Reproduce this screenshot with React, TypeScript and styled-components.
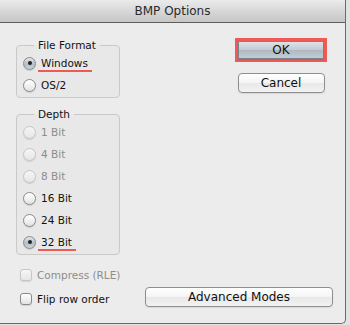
import React from 'react';
import styled, { createGlobalStyle } from 'styled-components';

const GlobalStyle = createGlobalStyle`
  html, body {
    margin: 0;
    padding: 0;
    background: #e2e2e2;
  }
  body {
    font-family: "DejaVu Sans", "Liberation Sans", sans-serif;
    color: #111;
  }
`;

const Window = styled.div`
  background: #ececec;
  border-bottom: 1px solid #6a6a6a;
  border-bottom-right-radius: 5px;
  border-right: 1px solid #6a6a6a;
  box-sizing: border-box;
  height: 324px;
  overflow: hidden;
  width: 346px;
`;

const TitleBar = styled.div`
  align-items: center;
  background: linear-gradient(#ebebeb, #d4d4d4 60%, #c6c6c6);
  border-bottom: 1px solid #5e5e5e;
  border-top-right-radius: 5px;
  display: flex;
  font-size: 12px;
  height: 22px;
  justify-content: center;
  color: #2a2a2a;
`;

const Body = styled.div`
  display: flex;
  flex-direction: column;
  padding: 16px 12px 0 16px;
`;

const TopSection = styled.div`
  display: flex;
  justify-content: space-between;
`;

const LeftColumn = styled.div`
  display: flex;
  flex-direction: column;
  gap: 10px;
  width: 104px;
`;

const GroupBox = styled.fieldset`
  background: rgba(0, 0, 0, 0.015);
  border: 1px solid #c9c9c9;
  border-radius: 4px;
  margin: 0;
  min-width: 0;
  padding: 0 0 1px 6px;
`;

const Legend = styled.legend`
  font-size: 10.5px;
  line-height: 13px;
  margin-left: 11px;
  padding: 0 4px;
`;

const OptionRow = styled.label<{ $disabled?: boolean }>`
  align-items: center;
  color: ${({ $disabled }) => ($disabled ? '#8c8c8c' : '#111')};
  display: flex;
  font-size: 10.5px;
  gap: 5px;
  height: 22px;
`;

const Radio = styled.span<{ $checked?: boolean; $disabled?: boolean }>`
  align-items: center;
  background: ${({ $checked, $disabled }) =>
    $disabled
      ? 'linear-gradient(#f6f6f6, #e6e6e6)'
      : $checked
      ? 'linear-gradient(#e4e8ec, #b4bdc6 55%, #cdd3d9)'
      : 'linear-gradient(#ffffff, #f2f2f2 50%, #e2e2e2)'};
  border: 1px solid ${({ $disabled }) => ($disabled ? '#c6c6c6' : '#8a8a8a')};
  border-radius: 50%;
  box-shadow: 0 1px 1px rgba(0, 0, 0, 0.12);
  box-sizing: border-box;
  display: flex;
  flex: none;
  height: 13px;
  justify-content: center;
  width: 13px;
  &::after {
    background: #222;
    border-radius: 50%;
    content: '';
    display: ${({ $checked }) => ($checked ? 'block' : 'none')};
    height: 4px;
    width: 4px;
  }
`;

const Checkbox = styled.span<{ $disabled?: boolean }>`
  background: ${({ $disabled }) =>
    $disabled ? 'linear-gradient(#f6f6f6, #e6e6e6)' : 'linear-gradient(#ffffff, #f1f1f1 50%, #e2e2e2)'};
  border: 1px solid ${({ $disabled }) => ($disabled ? '#c6c6c6' : '#8a8a8a')};
  border-radius: 3px;
  box-shadow: 0 1px 1px rgba(0, 0, 0, 0.1);
  box-sizing: border-box;
  flex: none;
  height: 12px;
  width: 12px;
`;

const Caption = styled.span<{ $marked?: boolean }>`
  border-bottom: 2px solid ${({ $marked }) => ($marked ? '#ef5b54' : 'transparent')};
  line-height: 13px;
  margin-left: -3px;
  margin-top: 3px;
  padding: 0 4px 0 3px;
`;

const RightColumn = styled.div`
  align-items: center;
  display: flex;
  flex-direction: column;
  gap: 11px;
  margin-right: 6px;
  margin-top: -1px;
  width: 92px;
`;

const Highlight = styled.div`
  border: 3px solid #ef5b54;
  box-sizing: border-box;
  width: 92px;
`;

const Button = styled.button<{ $default?: boolean }>`
  background: ${({ $default }) =>
    $default
      ? 'linear-gradient(#dde2e7, #c3cad2 50%, #aeb8c2 51%, #c4ccd4)'
      : 'linear-gradient(#ffffff, #f4f4f4 50%, #e8e8e8 51%, #f2f2f2)'};
  border: 1px solid ${({ $default }) => ($default ? '#7a838c' : '#8e8e8e')};
  border-radius: ${({ $default }) => ($default ? '0' : '4px')};
  box-shadow: 0 1px 1px rgba(0, 0, 0, 0.08);
  box-sizing: border-box;
  color: #111;
  display: block;
  font-family: "DejaVu Sans", "Liberation Sans", sans-serif;
  font-size: 12px;
  height: ${({ $default }) => ($default ? '18px' : '20px')};
  padding: 0;
  width: 100%;
`;

const CancelButton = styled(Button)`
  width: 87px;
`;

const CompressRow = styled.div`
  margin-left: 4px;
  margin-top: 9px;
`;

const BottomRow = styled.div`
  align-items: flex-start;
  display: flex;
  justify-content: space-between;
  margin-top: 1px;
`;

const FlipRow = styled.div`
  margin-left: 4px;
  margin-top: 1px;
`;

const AdvancedButton = styled(Button)`
  width: 188px;
`;

const depths = [
  { label: '1 Bit', disabled: true },
  { label: '4 Bit', disabled: true },
  { label: '8 Bit', disabled: true },
  { label: '16 Bit' },
  { label: '24 Bit' },
  { label: '32 Bit', checked: true },
];

const App: React.FC = () => {
  return (
    <>
      <GlobalStyle />
      <Window>
        <TitleBar>BMP Options</TitleBar>
        <Body>
          <TopSection>
            <LeftColumn>
              <GroupBox>
                <Legend>File Format</Legend>
                <OptionRow>
                  <Radio $checked />
                  <Caption $marked>Windows</Caption>
                </OptionRow>
                <OptionRow>
                  <Radio />
                  <Caption>OS/2</Caption>
                </OptionRow>
              </GroupBox>
              <GroupBox>
                <Legend>Depth</Legend>
                {depths.map(d => (
                  <OptionRow key={d.label} $disabled={d.disabled}>
                    <Radio $checked={d.checked} $disabled={d.disabled} />
                    <Caption $marked={d.checked}>{d.label}</Caption>
                  </OptionRow>
                ))}
              </GroupBox>
            </LeftColumn>
            <RightColumn>
              <Highlight>
                <Button $default>OK</Button>
              </Highlight>
              <CancelButton>Cancel</CancelButton>
            </RightColumn>
          </TopSection>
          <CompressRow>
            <OptionRow $disabled>
              <Checkbox $disabled />
              <Caption>Compress (RLE)</Caption>
            </OptionRow>
          </CompressRow>
          <BottomRow>
            <FlipRow>
              <OptionRow>
                <Checkbox />
                <Caption>Flip row order</Caption>
              </OptionRow>
            </FlipRow>
            <AdvancedButton>Advanced Modes</AdvancedButton>
          </BottomRow>
        </Body>
      </Window>
    </>
  );
};

export default App;
